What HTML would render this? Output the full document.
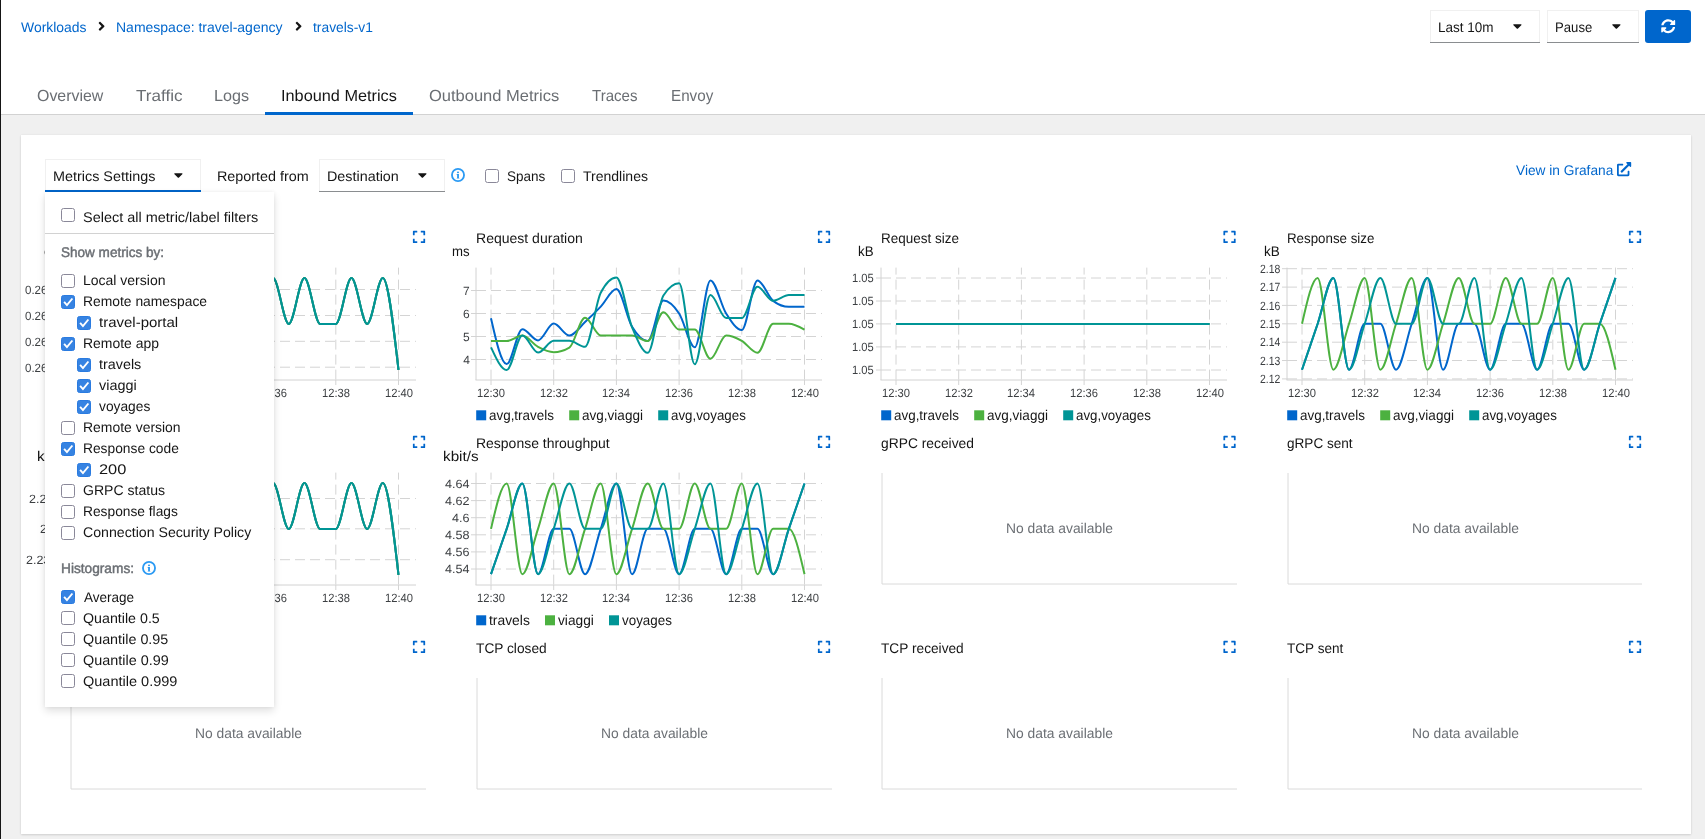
<!DOCTYPE html>
<html lang="en"><head><meta charset="utf-8"><title>Kiali</title><style>
html,body{margin:0;padding:0}
body{width:1705px;height:839px;position:relative;overflow:hidden;background:#fff;font-family:"Liberation Sans", Arial, sans-serif;font-size:14px;color:#151515}
.abs,.t,.ic,.cb{position:absolute}
.t{white-space:nowrap;line-height:1;text-rendering:geometricPrecision}
#root{left:0;top:0;width:1705px;height:839px;will-change:transform}
.ic{display:block;overflow:visible}
#side{left:0;top:0;width:1.1px;height:839px;background:#151515}
#hdr{left:1px;top:0;width:1704px;height:114px;background:#fff;border-bottom:1px solid #d2d2d2}
#bg{left:1px;top:115px;width:1704px;height:724px;background:#f0f0f0}
#card{left:21px;top:135px;width:1670px;height:699px;background:#fff;box-shadow:0 1px 2px rgba(3,3,3,.12),0 0 2px rgba(3,3,3,.06)}
#tabline{left:265px;top:111.5px;width:148px;height:3px;background:#0066cc}
.sel{box-sizing:border-box;background:#fff;border:1px solid #f0f0f0;border-bottom:0}
#refresh{left:1645px;top:10px;width:46px;height:33px;background:#0066cc;border-radius:3px}
#menu{left:45px;top:192px;width:229px;height:515px;background:#fff;box-shadow:0 4px 8px 0 rgba(3,3,3,.12),0 0 4px 0 rgba(3,3,3,.06)}
#menu .t,#menu .cb,#menu .ic,#menu .abs{margin-left:-45px;margin-top:-192px}
#msep{left:45px;top:233px;width:229px;height:1px;background:#d2d2d2}
.cb{box-sizing:border-box;width:14px;height:14px;border:1.3px solid #8a8899;border-radius:2.5px;background:#fff}
.cb.on{background:#3683e2;border:1px solid #2a7be0}
.cb svg{position:absolute;left:-1px;top:-1px}
#charts{left:0;top:0}
.g{position:static;display:block;margin:0;padding:0}
a.t{text-decoration:none}
</style></head>
<body>
<div id="root" class="abs">
<div id="hdr" class="abs"></div><div id="bg" class="abs"></div><div id="card" class="abs"></div><div id="side" class="abs"></div>
<nav class="g" aria-label="Breadcrumb"><a class="t" style="left:21.22px;top:20.00px;font-size:14px;color:#0066cc;transform:scaleX(0.9956);transform-origin:0 0;">Workloads</a><svg class="ic" style="left:97.90px;top:19.00px" width="7.20" height="14.40" viewBox="0 0 256 512"><path fill="#151515" d="M224.3 273l-136 136c-9.4 9.4-24.6 9.4-33.9 0l-22.6-22.6c-9.4-9.4-9.4-24.6 0-33.9l96.4-96.4-96.4-96.4c-9.4-9.4-9.4-24.6 0-33.9L54.3 103c9.4-9.4 24.6-9.4 33.9 0l136 136c9.5 9.4 9.5 24.6.1 34z"/></svg><a class="t" style="left:116.12px;top:20.00px;font-size:14px;color:#0066cc;transform:scaleX(0.9996);transform-origin:0 0;">Namespace: travel-agency</a><svg class="ic" style="left:294.90px;top:19.00px" width="7.20" height="14.40" viewBox="0 0 256 512"><path fill="#151515" d="M224.3 273l-136 136c-9.4 9.4-24.6 9.4-33.9 0l-22.6-22.6c-9.4-9.4-9.4-24.6 0-33.9l96.4-96.4-96.4-96.4c-9.4-9.4-9.4-24.6 0-33.9L54.3 103c9.4-9.4 24.6-9.4 33.9 0l136 136c9.5 9.4 9.5 24.6.1 34z"/></svg><a class="t" style="left:312.77px;top:20.00px;font-size:14px;color:#0066cc;transform:scaleX(0.9871);transform-origin:0 0;">travels-v1</a></nav>
<div class="g" id="time-controls"><div class="abs sel" style="left:1430px;top:10px;width:110px;height:32px"></div><div class="abs" style="left:1430px;top:42px;width:110px;height:1px;background:#8a8d90"></div><span class="t" style="left:1438.06px;top:20.10px;font-size:14px;color:#151515;transform:scaleX(0.9650);transform-origin:0 0;">Last 10m</span><svg class="ic" style="left:1512.80px;top:19.00px" width="8.75" height="14.00" viewBox="0 0 320 512"><path fill="#151515" d="M31.3 192h257.3c17.8 0 26.7 21.5 14.1 34.1L174.1 354.8c-7.8 7.8-20.5 7.8-28.3 0L17.2 226.1C4.6 213.5 13.5 192 31.3 192z"/></svg><div class="abs sel" style="left:1547px;top:10px;width:92px;height:32px"></div><div class="abs" style="left:1547px;top:42px;width:92px;height:1px;background:#8a8d90"></div><span class="t" style="left:1554.70px;top:20.10px;font-size:14px;color:#151515;transform:scaleX(0.9386);transform-origin:0 0;">Pause</span><svg class="ic" style="left:1611.80px;top:19.00px" width="8.75" height="14.00" viewBox="0 0 320 512"><path fill="#151515" d="M31.3 192h257.3c17.8 0 26.7 21.5 14.1 34.1L174.1 354.8c-7.8 7.8-20.5 7.8-28.3 0L17.2 226.1C4.6 213.5 13.5 192 31.3 192z"/></svg><div id="refresh" class="abs" role="button" aria-label="Refresh"></div><svg class="ic" style="left:1660.90px;top:19.30px" width="14.40" height="14.40" viewBox="0 0 512 512"><path fill="#fff" d="M370.72 133.28C339.458 104.008 298.888 87.962 255.848 88c-77.458.068-144.328 53.178-162.791 126.85-1.344 5.363-6.122 9.15-11.651 9.15H24.103c-7.498 0-13.194-6.807-11.807-14.176C33.933 94.924 134.813 8 256 8c66.448 0 126.791 26.136 171.315 68.685L463.03 40.97C478.149 25.851 504 36.559 504 57.941V192c0 13.255-10.745 24-24 24H345.941c-21.382 0-32.09-25.851-16.971-40.971l41.75-41.749zM32 296h134.059c21.382 0 32.09 25.851 16.971 40.971l-41.75 41.75c31.262 29.273 71.835 45.319 114.876 45.28 77.418-.07 144.315-53.144 162.787-126.849 1.344-5.363 6.122-9.15 11.651-9.15h57.304c7.498 0 13.194 6.807 11.807 14.176C478.067 417.076 377.187 504 256 504c-66.448 0-126.791-26.136-171.315-68.685L48.970 471.03C33.851 486.149 8 475.441 8 454.059V320c0-13.255 10.745-24 24-24z"/></svg></div>
<nav class="g" aria-label="Tabs"><a class="t" style="left:37.31px;top:89.10px;font-size:16px;color:#6a6e73;transform:scaleX(0.9948);transform-origin:0 0;">Overview</a><a class="t" style="left:136.00px;top:89.10px;font-size:16px;color:#6a6e73;transform:scaleX(1.0688);transform-origin:0 0;">Traffic</a><a class="t" style="left:214.46px;top:89.10px;font-size:16px;color:#6a6e73;transform:scaleX(1.0101);transform-origin:0 0;">Logs</a><a class="t" style="left:281.28px;top:89.10px;font-size:16px;color:#151515;transform:scaleX(1.0179);transform-origin:0 0;">Inbound Metrics</a><a class="t" style="left:428.77px;top:89.10px;font-size:16px;color:#6a6e73;transform:scaleX(1.0311);transform-origin:0 0;">Outbound Metrics</a><a class="t" style="left:592.45px;top:89.10px;font-size:16px;color:#6a6e73;transform:scaleX(0.9419);transform-origin:0 0;">Traces</a><a class="t" style="left:670.54px;top:89.10px;font-size:16px;color:#6a6e73;transform:scaleX(0.9495);transform-origin:0 0;">Envoy</a><div id="tabline" class="abs"></div></nav>
<div class="g" id="toolbar"><div class="abs sel" style="left:45px;top:159px;width:156px;height:31px"></div><div class="abs" style="left:45px;top:190px;width:156px;height:2px;background:#0066cc"></div><span class="t" style="left:53.09px;top:169.40px;font-size:14px;color:#151515;transform:scaleX(1.0275);transform-origin:0 0;">Metrics Settings</span><svg class="ic" style="left:173.90px;top:167.60px" width="8.75" height="14.00" viewBox="0 0 320 512"><path fill="#151515" d="M31.3 192h257.3c17.8 0 26.7 21.5 14.1 34.1L174.1 354.8c-7.8 7.8-20.5 7.8-28.3 0L17.2 226.1C4.6 213.5 13.5 192 31.3 192z"/></svg><span class="t" style="left:217.19px;top:169.40px;font-size:14px;color:#151515;transform:scaleX(1.0252);transform-origin:0 0;">Reported from</span><div class="abs sel" style="left:319px;top:159px;width:126px;height:32px"></div><div class="abs" style="left:319px;top:191px;width:126px;height:1px;background:#8a8d90"></div><span class="t" style="left:326.89px;top:169.40px;font-size:14px;color:#151515;transform:scaleX(1.0247);transform-origin:0 0;">Destination</span><svg class="ic" style="left:417.50px;top:167.60px" width="8.75" height="14.00" viewBox="0 0 320 512"><path fill="#151515" d="M31.3 192h257.3c17.8 0 26.7 21.5 14.1 34.1L174.1 354.8c-7.8 7.8-20.5 7.8-28.3 0L17.2 226.1C4.6 213.5 13.5 192 31.3 192z"/></svg><svg class="ic" style="left:451.40px;top:168.20px" width="14" height="14" viewBox="0 0 14 14"><circle cx="7" cy="7" r="6.05" fill="none" stroke="#2b9af3" stroke-width="1.8"/><ellipse cx="7" cy="4.3" rx="1.05" ry="0.85" fill="#2b9af3"/><path d="M5.7 6.1h2.25v3.6l0.6 0.9H5.5l0.6-0.9V6.9H5.7z" fill="#2b9af3"/></svg><span class="cb" style="left:484.7px;top:169.1px"></span><label class="t" style="left:506.76px;top:169.40px;font-size:14px;color:#151515;transform:scaleX(0.9652);transform-origin:0 0;">Spans</label><span class="cb" style="left:560.8px;top:169.1px"></span><label class="t" style="left:582.69px;top:169.40px;font-size:14px;color:#151515;transform:scaleX(1.0018);transform-origin:0 0;">Trendlines</label><a class="t" style="left:1516.32px;top:163.30px;font-size:14px;color:#0066cc;transform:scaleX(0.9792);transform-origin:0 0;">View in Grafana</a><svg class="ic" style="left:1617.20px;top:162.00px" width="14.20" height="14.20" viewBox="0 0 512 512"><path fill="#0066cc" d="M432,320H400a16,16,0,0,0-16,16V448H64V128H208a16,16,0,0,0,16-16V80a16,16,0,0,0-16-16H48A48,48,0,0,0,0,112V464a48,48,0,0,0,48,48H400a48,48,0,0,0,48-48V336A16,16,0,0,0,432,320ZM488,0h-128c-21.37,0-32.05,25.91-17,41l35.73,35.73L135,320.37a24,24,0,0,0,0,34L157.67,377a24,24,0,0,0,34,0L435.28,133.32,471,169c15,15,41,4.5,41-17V24A24,24,0,0,0,488,0Z"/></svg></div>
<section class="g chart" aria-label="Request volume"><span class="t title" style="left:69.69px;top:231.30px;font-size:14px;color:#151515;transform:scaleX(1.0307);transform-origin:0 0;">Request volume</span><span class="t" style="left:71.07px;top:386.90px;font-size:12px;color:#3c3f42;transform:scaleX(0.9321);transform-origin:0 0;">12:30</span><span class="t" style="left:133.77px;top:386.90px;font-size:12px;color:#3c3f42;transform:scaleX(0.9286);transform-origin:0 0;">12:32</span><span class="t" style="left:196.47px;top:386.90px;font-size:12px;color:#3c3f42;transform:scaleX(0.9342);transform-origin:0 0;">12:34</span><span class="t" style="left:259.17px;top:386.90px;font-size:12px;color:#3c3f42;transform:scaleX(0.9303);transform-origin:0 0;">12:36</span><span class="t" style="left:321.87px;top:386.90px;font-size:12px;color:#3c3f42;transform:scaleX(0.9299);transform-origin:0 0;">12:38</span><span class="t" style="left:384.57px;top:386.90px;font-size:12px;color:#3c3f42;transform:scaleX(0.9321);transform-origin:0 0;">12:40</span><span class="t" style="left:24.90px;top:284.10px;font-size:12px;color:#3c3f42;transform:scaleX(0.9593);transform-origin:0 0;">0.2675</span><span class="t" style="left:24.90px;top:310.20px;font-size:12px;color:#3c3f42;transform:scaleX(0.9596);transform-origin:0 0;">0.2670</span><span class="t" style="left:24.90px;top:336.10px;font-size:12px;color:#3c3f42;transform:scaleX(0.9593);transform-origin:0 0;">0.2665</span><span class="t" style="left:24.90px;top:361.60px;font-size:12px;color:#3c3f42;transform:scaleX(0.9596);transform-origin:0 0;">0.2660</span><span class="t" style="left:44.25px;top:244.20px;font-size:14px;color:#151515;transform:scaleX(1.0304);transform-origin:0 0;">ops</span><span class="t" style="left:83.07px;top:408.40px;font-size:14px;color:#151515;transform:scaleX(0.9899);transform-origin:0 0;">travels</span><span class="t" style="left:152.39px;top:408.40px;font-size:14px;color:#151515;transform:scaleX(0.9791);transform-origin:0 0;">viaggi</span><span class="t" style="left:216.40px;top:408.40px;font-size:14px;color:#151515;transform:scaleX(0.9567);transform-origin:0 0;">voyages</span></section>
<section class="g chart" aria-label="Request duration"><span class="t title" style="left:475.72px;top:231.30px;font-size:14px;color:#151515;transform:scaleX(1.0016);transform-origin:0 0;">Request duration</span><span class="t" style="left:477.07px;top:386.90px;font-size:12px;color:#3c3f42;transform:scaleX(0.9321);transform-origin:0 0;">12:30</span><span class="t" style="left:539.77px;top:386.90px;font-size:12px;color:#3c3f42;transform:scaleX(0.9286);transform-origin:0 0;">12:32</span><span class="t" style="left:602.47px;top:386.90px;font-size:12px;color:#3c3f42;transform:scaleX(0.9342);transform-origin:0 0;">12:34</span><span class="t" style="left:665.17px;top:386.90px;font-size:12px;color:#3c3f42;transform:scaleX(0.9303);transform-origin:0 0;">12:36</span><span class="t" style="left:727.87px;top:386.90px;font-size:12px;color:#3c3f42;transform:scaleX(0.9299);transform-origin:0 0;">12:38</span><span class="t" style="left:790.57px;top:386.90px;font-size:12px;color:#3c3f42;transform:scaleX(0.9321);transform-origin:0 0;">12:40</span><span class="t" style="left:462.95px;top:284.70px;font-size:12px;color:#3c3f42;transform:scaleX(1.0000);transform-origin:0 0;">7</span><span class="t" style="left:462.94px;top:307.70px;font-size:12px;color:#3c3f42;transform:scaleX(1.0000);transform-origin:0 0;">6</span><span class="t" style="left:462.94px;top:330.70px;font-size:12px;color:#3c3f42;transform:scaleX(1.0000);transform-origin:0 0;">5</span><span class="t" style="left:463.13px;top:353.70px;font-size:12px;color:#3c3f42;transform:scaleX(1.0000);transform-origin:0 0;">4</span><span class="t" style="left:452.36px;top:244.20px;font-size:14px;color:#151515;transform:scaleX(0.9412);transform-origin:0 0;">ms</span><span class="t" style="left:489.07px;top:408.40px;font-size:14px;color:#151515;transform:scaleX(0.9587);transform-origin:0 0;">avg,travels</span><span class="t" style="left:582.36px;top:408.40px;font-size:14px;color:#151515;transform:scaleX(0.9668);transform-origin:0 0;">avg,viaggi</span><span class="t" style="left:671.18px;top:408.40px;font-size:14px;color:#151515;transform:scaleX(0.9516);transform-origin:0 0;">avg,voyages</span></section>
<section class="g chart" aria-label="Request size"><span class="t title" style="left:880.77px;top:231.30px;font-size:14px;color:#151515;transform:scaleX(0.9633);transform-origin:0 0;">Request size</span><span class="t" style="left:882.07px;top:386.90px;font-size:12px;color:#3c3f42;transform:scaleX(0.9321);transform-origin:0 0;">12:30</span><span class="t" style="left:944.77px;top:386.90px;font-size:12px;color:#3c3f42;transform:scaleX(0.9286);transform-origin:0 0;">12:32</span><span class="t" style="left:1007.47px;top:386.90px;font-size:12px;color:#3c3f42;transform:scaleX(0.9342);transform-origin:0 0;">12:34</span><span class="t" style="left:1070.17px;top:386.90px;font-size:12px;color:#3c3f42;transform:scaleX(0.9303);transform-origin:0 0;">12:36</span><span class="t" style="left:1132.87px;top:386.90px;font-size:12px;color:#3c3f42;transform:scaleX(0.9299);transform-origin:0 0;">12:38</span><span class="t" style="left:1195.57px;top:386.90px;font-size:12px;color:#3c3f42;transform:scaleX(0.9321);transform-origin:0 0;">12:40</span><span class="t" style="left:851.96px;top:272.20px;font-size:12px;color:#3c3f42;transform:scaleX(0.9300);transform-origin:0 0;">1.05</span><span class="t" style="left:851.96px;top:295.20px;font-size:12px;color:#3c3f42;transform:scaleX(0.9300);transform-origin:0 0;">1.05</span><span class="t" style="left:851.96px;top:318.10px;font-size:12px;color:#3c3f42;transform:scaleX(0.9300);transform-origin:0 0;">1.05</span><span class="t" style="left:851.96px;top:341.10px;font-size:12px;color:#3c3f42;transform:scaleX(0.9300);transform-origin:0 0;">1.05</span><span class="t" style="left:851.96px;top:364.20px;font-size:12px;color:#3c3f42;transform:scaleX(0.9300);transform-origin:0 0;">1.05</span><span class="t" style="left:857.55px;top:244.20px;font-size:14px;color:#151515;transform:scaleX(0.9503);transform-origin:0 0;">kB</span><span class="t" style="left:894.07px;top:408.40px;font-size:14px;color:#151515;transform:scaleX(0.9587);transform-origin:0 0;">avg,travels</span><span class="t" style="left:987.36px;top:408.40px;font-size:14px;color:#151515;transform:scaleX(0.9668);transform-origin:0 0;">avg,viaggi</span><span class="t" style="left:1076.18px;top:408.40px;font-size:14px;color:#151515;transform:scaleX(0.9516);transform-origin:0 0;">avg,voyages</span></section>
<section class="g chart" aria-label="Response size"><span class="t title" style="left:1286.78px;top:231.30px;font-size:14px;color:#151515;transform:scaleX(0.9519);transform-origin:0 0;">Response size</span><span class="t" style="left:1288.07px;top:386.90px;font-size:12px;color:#3c3f42;transform:scaleX(0.9321);transform-origin:0 0;">12:30</span><span class="t" style="left:1350.77px;top:386.90px;font-size:12px;color:#3c3f42;transform:scaleX(0.9286);transform-origin:0 0;">12:32</span><span class="t" style="left:1413.47px;top:386.90px;font-size:12px;color:#3c3f42;transform:scaleX(0.9342);transform-origin:0 0;">12:34</span><span class="t" style="left:1476.17px;top:386.90px;font-size:12px;color:#3c3f42;transform:scaleX(0.9303);transform-origin:0 0;">12:36</span><span class="t" style="left:1538.87px;top:386.90px;font-size:12px;color:#3c3f42;transform:scaleX(0.9299);transform-origin:0 0;">12:38</span><span class="t" style="left:1601.57px;top:386.90px;font-size:12px;color:#3c3f42;transform:scaleX(0.9321);transform-origin:0 0;">12:40</span><span class="t" style="left:1259.52px;top:262.90px;font-size:12px;color:#3c3f42;transform:scaleX(0.8700);transform-origin:0 0;">2.18</span><span class="t" style="left:1259.62px;top:281.30px;font-size:12px;color:#3c3f42;transform:scaleX(0.8700);transform-origin:0 0;">2.17</span><span class="t" style="left:1259.55px;top:299.60px;font-size:12px;color:#3c3f42;transform:scaleX(0.8700);transform-origin:0 0;">2.16</span><span class="t" style="left:1259.53px;top:318.00px;font-size:12px;color:#3c3f42;transform:scaleX(0.8700);transform-origin:0 0;">2.15</span><span class="t" style="left:1259.62px;top:336.40px;font-size:12px;color:#3c3f42;transform:scaleX(0.8700);transform-origin:0 0;">2.14</span><span class="t" style="left:1259.56px;top:354.70px;font-size:12px;color:#3c3f42;transform:scaleX(0.8700);transform-origin:0 0;">2.13</span><span class="t" style="left:1259.56px;top:373.10px;font-size:12px;color:#3c3f42;transform:scaleX(0.8700);transform-origin:0 0;">2.12</span><span class="t" style="left:1263.74px;top:244.20px;font-size:14px;color:#151515;transform:scaleX(0.9641);transform-origin:0 0;">kB</span><span class="t" style="left:1300.07px;top:408.40px;font-size:14px;color:#151515;transform:scaleX(0.9587);transform-origin:0 0;">avg,travels</span><span class="t" style="left:1393.36px;top:408.40px;font-size:14px;color:#151515;transform:scaleX(0.9668);transform-origin:0 0;">avg,viaggi</span><span class="t" style="left:1482.18px;top:408.40px;font-size:14px;color:#151515;transform:scaleX(0.9516);transform-origin:0 0;">avg,voyages</span></section>
<section class="g chart" aria-label="Request throughput"><span class="t title" style="left:69.71px;top:436.30px;font-size:14px;color:#151515;transform:scaleX(1.0076);transform-origin:0 0;">Request throughput</span><span class="t" style="left:71.07px;top:591.90px;font-size:12px;color:#3c3f42;transform:scaleX(0.9321);transform-origin:0 0;">12:30</span><span class="t" style="left:133.77px;top:591.90px;font-size:12px;color:#3c3f42;transform:scaleX(0.9286);transform-origin:0 0;">12:32</span><span class="t" style="left:196.47px;top:591.90px;font-size:12px;color:#3c3f42;transform:scaleX(0.9342);transform-origin:0 0;">12:34</span><span class="t" style="left:259.17px;top:591.90px;font-size:12px;color:#3c3f42;transform:scaleX(0.9303);transform-origin:0 0;">12:36</span><span class="t" style="left:321.87px;top:591.90px;font-size:12px;color:#3c3f42;transform:scaleX(0.9299);transform-origin:0 0;">12:38</span><span class="t" style="left:384.57px;top:591.90px;font-size:12px;color:#3c3f42;transform:scaleX(0.9321);transform-origin:0 0;">12:40</span><span class="t" style="left:28.96px;top:493.20px;font-size:12px;color:#3c3f42;transform:scaleX(1.0377);transform-origin:0 0;">2.245</span><span class="t" style="left:40.37px;top:523.20px;font-size:12px;color:#3c3f42;transform:scaleX(1.0307);transform-origin:0 0;">2.24</span><span class="t" style="left:26.16px;top:554.20px;font-size:12px;color:#3c3f42;transform:scaleX(1.0377);transform-origin:0 0;">2.235</span><span class="t" style="left:36.81px;top:449.20px;font-size:14px;color:#151515;transform:scaleX(1.0903);transform-origin:0 0;">kbit/s</span><span class="t" style="left:83.07px;top:613.40px;font-size:14px;color:#151515;transform:scaleX(0.9899);transform-origin:0 0;">travels</span><span class="t" style="left:152.39px;top:613.40px;font-size:14px;color:#151515;transform:scaleX(0.9791);transform-origin:0 0;">viaggi</span><span class="t" style="left:216.40px;top:613.40px;font-size:14px;color:#151515;transform:scaleX(0.9567);transform-origin:0 0;">voyages</span></section>
<section class="g chart" aria-label="Response throughput"><span class="t title" style="left:475.73px;top:436.30px;font-size:14px;color:#151515;transform:scaleX(0.9979);transform-origin:0 0;">Response throughput</span><span class="t" style="left:477.07px;top:591.90px;font-size:12px;color:#3c3f42;transform:scaleX(0.9321);transform-origin:0 0;">12:30</span><span class="t" style="left:539.77px;top:591.90px;font-size:12px;color:#3c3f42;transform:scaleX(0.9286);transform-origin:0 0;">12:32</span><span class="t" style="left:602.47px;top:591.90px;font-size:12px;color:#3c3f42;transform:scaleX(0.9342);transform-origin:0 0;">12:34</span><span class="t" style="left:665.17px;top:591.90px;font-size:12px;color:#3c3f42;transform:scaleX(0.9303);transform-origin:0 0;">12:36</span><span class="t" style="left:727.87px;top:591.90px;font-size:12px;color:#3c3f42;transform:scaleX(0.9299);transform-origin:0 0;">12:38</span><span class="t" style="left:790.57px;top:591.90px;font-size:12px;color:#3c3f42;transform:scaleX(0.9321);transform-origin:0 0;">12:40</span><span class="t" style="left:445.03px;top:477.70px;font-size:12px;color:#3c3f42;transform:scaleX(1.0500);transform-origin:0 0;">4.64</span><span class="t" style="left:444.95px;top:494.80px;font-size:12px;color:#3c3f42;transform:scaleX(1.0500);transform-origin:0 0;">4.62</span><span class="t" style="left:452.14px;top:511.90px;font-size:12px;color:#3c3f42;transform:scaleX(1.0500);transform-origin:0 0;">4.6</span><span class="t" style="left:444.91px;top:529.00px;font-size:12px;color:#3c3f42;transform:scaleX(1.0500);transform-origin:0 0;">4.58</span><span class="t" style="left:444.94px;top:546.10px;font-size:12px;color:#3c3f42;transform:scaleX(1.0500);transform-origin:0 0;">4.56</span><span class="t" style="left:445.03px;top:563.20px;font-size:12px;color:#3c3f42;transform:scaleX(1.0500);transform-origin:0 0;">4.54</span><span class="t" style="left:442.81px;top:449.20px;font-size:14px;color:#151515;transform:scaleX(1.0903);transform-origin:0 0;">kbit/s</span><span class="t" style="left:489.07px;top:613.40px;font-size:14px;color:#151515;transform:scaleX(0.9899);transform-origin:0 0;">travels</span><span class="t" style="left:558.39px;top:613.40px;font-size:14px;color:#151515;transform:scaleX(0.9791);transform-origin:0 0;">viaggi</span><span class="t" style="left:622.40px;top:613.40px;font-size:14px;color:#151515;transform:scaleX(0.9567);transform-origin:0 0;">voyages</span></section>
<section class="g chart" aria-label="gRPC received"><span class="t title" style="left:880.91px;top:436.30px;font-size:14px;color:#151515;transform:scaleX(0.9870);transform-origin:0 0;">gRPC received</span><span class="t" style="left:1005.64px;top:521.00px;font-size:14px;color:#6a6e73;transform:scaleX(0.9883);transform-origin:0 0;">No data available</span></section>
<section class="g chart" aria-label="gRPC sent"><span class="t title" style="left:1286.93px;top:436.30px;font-size:14px;color:#151515;transform:scaleX(0.9688);transform-origin:0 0;">gRPC sent</span><span class="t" style="left:1411.64px;top:521.00px;font-size:14px;color:#6a6e73;transform:scaleX(0.9883);transform-origin:0 0;">No data available</span></section>
<section class="g chart" aria-label="TCP opened"><span class="t title" style="left:70.35px;top:641.30px;font-size:14px;color:#151515;transform:scaleX(0.9604);transform-origin:0 0;">TCP opened</span><span class="t" style="left:194.64px;top:726.00px;font-size:14px;color:#6a6e73;transform:scaleX(0.9883);transform-origin:0 0;">No data available</span></section>
<section class="g chart" aria-label="TCP closed"><span class="t title" style="left:476.32px;top:641.30px;font-size:14px;color:#151515;transform:scaleX(0.9800);transform-origin:0 0;">TCP closed</span><span class="t" style="left:600.64px;top:726.00px;font-size:14px;color:#6a6e73;transform:scaleX(0.9883);transform-origin:0 0;">No data available</span></section>
<section class="g chart" aria-label="TCP received"><span class="t title" style="left:881.32px;top:641.30px;font-size:14px;color:#151515;transform:scaleX(0.9783);transform-origin:0 0;">TCP received</span><span class="t" style="left:1005.64px;top:726.00px;font-size:14px;color:#6a6e73;transform:scaleX(0.9883);transform-origin:0 0;">No data available</span></section>
<section class="g chart" aria-label="TCP sent"><span class="t title" style="left:1287.34px;top:641.30px;font-size:14px;color:#151515;transform:scaleX(0.9682);transform-origin:0 0;">TCP sent</span><span class="t" style="left:1411.64px;top:726.00px;font-size:14px;color:#6a6e73;transform:scaleX(0.9883);transform-origin:0 0;">No data available</span></section>
<svg id="charts" class="abs" width="1705" height="839" viewBox="0 0 1705 839"><g aria-label="Request volume"><g transform="translate(412.90,230.00) scale(0.02734)" fill="#0066cc"><path d="M0 180V56c0-13.3 10.7-24 24-24h124c6.600 0 12 5.400 12 12v40c0 6.600-5.400 12-12 12H64v84c0 6.600-5.400 12-12 12H12c-6.600 0-12-5.400-12-12zM288 44v40c0 6.600 5.400 12 12 12h84v84c0 6.600 5.400 12 12 12h40c6.600 0 12-5.400 12-12V56c0-13.300-10.700-24-24-24H300c-6.600 0-12 5.400-12 12zm148 276h-40c-6.600 0-12 5.400-12 12v84h-84c-6.600 0-12 5.400-12 12v40c0 6.600 5.400 12 12 12h124c13.300 0 24-10.700 24-24V332c0-6.600-5.400-12-12-12zM160 468v-40c0-6.600-5.400-12-12-12H64v-84c0-6.600-5.400-12-12-12H12c-6.600 0-12 5.400-12 12v124c0 13.300 10.700 24 24 24h124c6.600 0 12-5.400 12-12z"/></g><path d="M85.00,379.60V267.60" stroke="#d4d4d4" stroke-width="1" stroke-dasharray="10,5" fill="none"/><path d="M85.00,380.00v5" stroke="#d4d4d4" stroke-width="1" fill="none"/><path d="M147.70,379.60V267.60" stroke="#d4d4d4" stroke-width="1" stroke-dasharray="10,5" fill="none"/><path d="M147.70,380.00v5" stroke="#d4d4d4" stroke-width="1" fill="none"/><path d="M210.40,379.60V267.60" stroke="#d4d4d4" stroke-width="1" stroke-dasharray="10,5" fill="none"/><path d="M210.40,380.00v5" stroke="#d4d4d4" stroke-width="1" fill="none"/><path d="M273.10,379.60V267.60" stroke="#d4d4d4" stroke-width="1" stroke-dasharray="10,5" fill="none"/><path d="M273.10,380.00v5" stroke="#d4d4d4" stroke-width="1" fill="none"/><path d="M335.80,379.60V267.60" stroke="#d4d4d4" stroke-width="1" stroke-dasharray="10,5" fill="none"/><path d="M335.80,380.00v5" stroke="#d4d4d4" stroke-width="1" fill="none"/><path d="M398.50,379.60V267.60" stroke="#d4d4d4" stroke-width="1" stroke-dasharray="10,5" fill="none"/><path d="M398.50,380.00v5" stroke="#d4d4d4" stroke-width="1" fill="none"/><path d="M70.00,289.50H416.00" stroke="#d4d4d4" stroke-width="1" stroke-dasharray="10,5" fill="none"/><path d="M65.00,289.50h5" stroke="#d4d4d4" stroke-width="1" fill="none"/><path d="M70.00,315.50H416.00" stroke="#d4d4d4" stroke-width="1" stroke-dasharray="10,5" fill="none"/><path d="M65.00,315.50h5" stroke="#d4d4d4" stroke-width="1" fill="none"/><path d="M70.00,341.30H416.00" stroke="#d4d4d4" stroke-width="1" stroke-dasharray="10,5" fill="none"/><path d="M65.00,341.30h5" stroke="#d4d4d4" stroke-width="1" fill="none"/><path d="M70.00,367.20H416.00" stroke="#d4d4d4" stroke-width="1" stroke-dasharray="10,5" fill="none"/><path d="M65.00,367.20h5" stroke="#d4d4d4" stroke-width="1" fill="none"/><path d="M70.00,267.60V380.00" stroke="#d2d2d2" stroke-width="1" fill="none"/><path d="M69.50,380.00H416.00" stroke="#d2d2d2" stroke-width="1" fill="none"/><path d="M85.00,324.00C90.22,301.05,95.45,278.10,100.67,278.10C105.90,278.10,111.12,324.00,116.35,324.00C121.58,324.00,126.80,278.10,132.03,278.10C137.25,278.10,142.47,324.00,147.70,324.00C152.92,324.00,158.15,324.00,163.38,324.00C168.60,324.00,173.83,278.10,179.05,278.10C184.28,278.10,189.50,324.00,194.72,324.00C199.95,324.00,205.18,324.00,210.40,324.00C215.62,324.00,220.85,278.10,226.07,278.10C231.30,278.10,236.53,324.00,241.75,324.00C246.97,324.00,252.20,324.00,257.43,324.00C262.65,324.00,267.88,278.10,273.10,278.10C278.32,278.10,283.55,324.00,288.77,324.00C294.00,324.00,299.22,278.10,304.45,278.10C309.68,278.10,314.90,324.00,320.12,324.00C325.35,324.00,330.57,324.00,335.80,324.00C341.03,324.00,346.25,278.10,351.48,278.10C356.70,278.10,361.93,324.00,367.15,324.00C372.38,324.00,377.60,278.10,382.82,278.10C388.05,278.10,393.27,324.00,398.50,369.90" stroke="#0066cc" stroke-width="2" fill="none"/><path d="M85.00,324.00C90.22,301.05,95.45,278.10,100.67,278.10C105.90,278.10,111.12,324.00,116.35,324.00C121.58,324.00,126.80,278.10,132.03,278.10C137.25,278.10,142.47,324.00,147.70,324.00C152.92,324.00,158.15,324.00,163.38,324.00C168.60,324.00,173.83,278.10,179.05,278.10C184.28,278.10,189.50,324.00,194.72,324.00C199.95,324.00,205.18,324.00,210.40,324.00C215.62,324.00,220.85,278.10,226.07,278.10C231.30,278.10,236.53,324.00,241.75,324.00C246.97,324.00,252.20,324.00,257.43,324.00C262.65,324.00,267.88,278.10,273.10,278.10C278.32,278.10,283.55,324.00,288.77,324.00C294.00,324.00,299.22,278.10,304.45,278.10C309.68,278.10,314.90,324.00,320.12,324.00C325.35,324.00,330.57,324.00,335.80,324.00C341.03,324.00,346.25,278.10,351.48,278.10C356.70,278.10,361.93,324.00,367.15,324.00C372.38,324.00,377.60,278.10,382.82,278.10C388.05,278.10,393.27,324.00,398.50,369.90" stroke="#4cb140" stroke-width="2" fill="none"/><path d="M85.00,324.00C90.22,301.05,95.45,278.10,100.67,278.10C105.90,278.10,111.12,324.00,116.35,324.00C121.58,324.00,126.80,278.10,132.03,278.10C137.25,278.10,142.47,324.00,147.70,324.00C152.92,324.00,158.15,324.00,163.38,324.00C168.60,324.00,173.83,278.10,179.05,278.10C184.28,278.10,189.50,324.00,194.72,324.00C199.95,324.00,205.18,324.00,210.40,324.00C215.62,324.00,220.85,278.10,226.07,278.10C231.30,278.10,236.53,324.00,241.75,324.00C246.97,324.00,252.20,324.00,257.43,324.00C262.65,324.00,267.88,278.10,273.10,278.10C278.32,278.10,283.55,324.00,288.77,324.00C294.00,324.00,299.22,278.10,304.45,278.10C309.68,278.10,314.90,324.00,320.12,324.00C325.35,324.00,330.57,324.00,335.80,324.00C341.03,324.00,346.25,278.10,351.48,278.10C356.70,278.10,361.93,324.00,367.15,324.00C372.38,324.00,377.60,278.10,382.82,278.10C388.05,278.10,393.27,324.00,398.50,369.90" stroke="#009596" stroke-width="2" fill="none"/><rect x="70.20" y="410.30" width="10" height="10" fill="#0066cc"/><rect x="139.00" y="410.30" width="10" height="10" fill="#4cb140"/><rect x="203.00" y="410.30" width="10" height="10" fill="#009596"/></g><g aria-label="Request duration"><g transform="translate(817.90,230.00) scale(0.02734)" fill="#0066cc"><path d="M0 180V56c0-13.3 10.7-24 24-24h124c6.600 0 12 5.400 12 12v40c0 6.600-5.400 12-12 12H64v84c0 6.600-5.400 12-12 12H12c-6.600 0-12-5.400-12-12zM288 44v40c0 6.600 5.400 12 12 12h84v84c0 6.600 5.400 12 12 12h40c6.600 0 12-5.400 12-12V56c0-13.300-10.700-24-24-24H300c-6.600 0-12 5.400-12 12zm148 276h-40c-6.600 0-12 5.400-12 12v84h-84c-6.600 0-12 5.400-12 12v40c0 6.600 5.400 12 12 12h124c13.300 0 24-10.700 24-24V332c0-6.600-5.400-12-12-12zM160 468v-40c0-6.600-5.400-12-12-12H64v-84c0-6.600-5.400-12-12-12H12c-6.600 0-12 5.400-12 12v124c0 13.300 10.700 24 24 24h124c6.600 0 12-5.400 12-12z"/></g><path d="M491.00,379.60V267.60" stroke="#d4d4d4" stroke-width="1" stroke-dasharray="10,5" fill="none"/><path d="M491.00,380.00v5" stroke="#d4d4d4" stroke-width="1" fill="none"/><path d="M553.70,379.60V267.60" stroke="#d4d4d4" stroke-width="1" stroke-dasharray="10,5" fill="none"/><path d="M553.70,380.00v5" stroke="#d4d4d4" stroke-width="1" fill="none"/><path d="M616.40,379.60V267.60" stroke="#d4d4d4" stroke-width="1" stroke-dasharray="10,5" fill="none"/><path d="M616.40,380.00v5" stroke="#d4d4d4" stroke-width="1" fill="none"/><path d="M679.10,379.60V267.60" stroke="#d4d4d4" stroke-width="1" stroke-dasharray="10,5" fill="none"/><path d="M679.10,380.00v5" stroke="#d4d4d4" stroke-width="1" fill="none"/><path d="M741.80,379.60V267.60" stroke="#d4d4d4" stroke-width="1" stroke-dasharray="10,5" fill="none"/><path d="M741.80,380.00v5" stroke="#d4d4d4" stroke-width="1" fill="none"/><path d="M804.50,379.60V267.60" stroke="#d4d4d4" stroke-width="1" stroke-dasharray="10,5" fill="none"/><path d="M804.50,380.00v5" stroke="#d4d4d4" stroke-width="1" fill="none"/><path d="M476.00,290.50H822.00" stroke="#d4d4d4" stroke-width="1" stroke-dasharray="10,5" fill="none"/><path d="M471.00,290.50h5" stroke="#d4d4d4" stroke-width="1" fill="none"/><path d="M476.00,313.50H822.00" stroke="#d4d4d4" stroke-width="1" stroke-dasharray="10,5" fill="none"/><path d="M471.00,313.50h5" stroke="#d4d4d4" stroke-width="1" fill="none"/><path d="M476.00,336.50H822.00" stroke="#d4d4d4" stroke-width="1" stroke-dasharray="10,5" fill="none"/><path d="M471.00,336.50h5" stroke="#d4d4d4" stroke-width="1" fill="none"/><path d="M476.00,359.50H822.00" stroke="#d4d4d4" stroke-width="1" stroke-dasharray="10,5" fill="none"/><path d="M471.00,359.50h5" stroke="#d4d4d4" stroke-width="1" fill="none"/><path d="M476.00,267.60V380.00" stroke="#d2d2d2" stroke-width="1" fill="none"/><path d="M475.50,380.00H822.00" stroke="#d2d2d2" stroke-width="1" fill="none"/><path d="M491.00,318.33C496.23,341.22,501.45,364.10,506.68,364.10C511.90,364.10,517.12,329.14,522.35,329.14C527.58,329.14,532.80,340.41,538.02,340.41C543.25,340.41,548.48,323.62,553.70,323.62C558.93,323.62,564.15,335.58,569.38,335.58C574.60,335.58,579.82,326.84,585.05,322.01C590.27,317.18,595.50,312.08,600.73,306.60C605.95,301.12,611.17,289.12,616.40,289.12C621.62,289.12,626.85,318.18,632.08,326.84C637.30,335.50,642.52,341.10,647.75,341.10C652.98,341.10,658.20,300.62,663.42,300.62C668.65,300.62,673.88,305.72,679.10,313.50C684.33,321.28,689.55,347.31,694.77,347.31C700.00,347.31,705.23,280.38,710.45,280.38C715.68,280.38,720.90,305.22,726.12,313.50C731.35,321.78,736.57,330.06,741.80,330.06C747.02,330.06,752.25,280.38,757.48,280.38C762.70,280.38,767.92,296.86,773.15,300.85C778.38,304.84,783.60,306.83,788.83,306.83C794.05,306.83,799.27,306.83,804.50,306.83" stroke="#0066cc" stroke-width="2" fill="none"/><path d="M491.00,341.10C496.23,341.10,501.45,341.10,506.68,341.10C511.90,341.10,517.12,335.58,522.35,335.58C527.58,335.58,532.80,344.09,538.02,346.85C543.25,349.61,548.48,352.14,553.70,352.14C558.93,352.14,564.15,350.61,569.38,347.54C574.60,344.47,579.82,317.64,585.05,317.64C590.27,317.64,595.50,335.58,600.73,335.58C605.95,335.58,611.17,335.58,616.40,335.58C621.62,335.58,626.85,335.58,632.08,335.58C637.30,335.58,642.52,341.10,647.75,341.10C652.98,341.10,658.20,312.35,663.42,312.35C668.65,312.35,673.88,329.60,679.10,329.60C684.33,329.60,689.55,329.60,694.77,329.60C700.00,329.60,705.23,358.81,710.45,358.81C715.68,358.81,720.90,335.58,726.12,335.58C731.35,335.58,736.57,338.00,741.80,340.87C747.02,343.75,752.25,352.83,757.48,352.83C762.70,352.83,767.92,323.85,773.15,323.85C778.38,323.85,783.60,323.85,788.83,323.85C794.05,323.85,799.27,326.73,804.50,329.60" stroke="#4cb140" stroke-width="2" fill="none"/><path d="M491.00,347.31C496.23,358.69,501.45,370.08,506.68,370.08C511.90,370.08,517.12,335.58,522.35,335.58C527.58,335.58,532.80,352.60,538.02,352.60C543.25,352.60,548.48,340.87,553.70,340.87C558.93,340.87,564.15,340.87,569.38,340.87C574.60,340.87,579.82,346.85,585.05,346.85C590.27,346.85,595.50,303.07,600.73,292.80C605.95,282.53,611.17,277.39,616.40,277.39C621.62,277.39,626.85,314.73,632.08,327.30C637.30,339.87,642.52,352.83,647.75,352.83C652.98,352.83,658.20,303.69,663.42,295.56C668.65,287.43,673.88,283.37,679.10,283.37C684.33,283.37,689.55,364.33,694.77,364.33C700.00,364.33,705.23,295.10,710.45,295.10C715.68,295.10,720.90,318.10,726.12,318.10C731.35,318.10,736.57,318.10,741.80,318.10C747.02,318.10,752.25,286.82,757.48,286.82C762.70,286.82,767.92,300.85,773.15,300.85C778.38,300.85,783.60,295.10,788.83,295.10C794.05,295.10,799.27,295.10,804.50,295.10" stroke="#009596" stroke-width="2" fill="none"/><rect x="476.20" y="410.30" width="10" height="10" fill="#0066cc"/><rect x="569.20" y="410.30" width="10" height="10" fill="#4cb140"/><rect x="658.20" y="410.30" width="10" height="10" fill="#009596"/></g><g aria-label="Request size"><g transform="translate(1223.40,230.00) scale(0.02734)" fill="#0066cc"><path d="M0 180V56c0-13.3 10.7-24 24-24h124c6.600 0 12 5.400 12 12v40c0 6.600-5.400 12-12 12H64v84c0 6.600-5.400 12-12 12H12c-6.600 0-12-5.400-12-12zM288 44v40c0 6.600 5.400 12 12 12h84v84c0 6.600 5.400 12 12 12h40c6.600 0 12-5.400 12-12V56c0-13.300-10.700-24-24-24H300c-6.600 0-12 5.400-12 12zm148 276h-40c-6.600 0-12 5.400-12 12v84h-84c-6.600 0-12 5.400-12 12v40c0 6.600 5.400 12 12 12h124c13.300 0 24-10.700 24-24V332c0-6.600-5.400-12-12-12zM160 468v-40c0-6.600-5.400-12-12-12H64v-84c0-6.600-5.400-12-12-12H12c-6.600 0-12 5.400-12 12v124c0 13.300 10.700 24 24 24h124c6.600 0 12-5.400 12-12z"/></g><path d="M896.00,379.60V267.60" stroke="#d4d4d4" stroke-width="1" stroke-dasharray="10,5" fill="none"/><path d="M896.00,380.00v5" stroke="#d4d4d4" stroke-width="1" fill="none"/><path d="M958.70,379.60V267.60" stroke="#d4d4d4" stroke-width="1" stroke-dasharray="10,5" fill="none"/><path d="M958.70,380.00v5" stroke="#d4d4d4" stroke-width="1" fill="none"/><path d="M1021.40,379.60V267.60" stroke="#d4d4d4" stroke-width="1" stroke-dasharray="10,5" fill="none"/><path d="M1021.40,380.00v5" stroke="#d4d4d4" stroke-width="1" fill="none"/><path d="M1084.10,379.60V267.60" stroke="#d4d4d4" stroke-width="1" stroke-dasharray="10,5" fill="none"/><path d="M1084.10,380.00v5" stroke="#d4d4d4" stroke-width="1" fill="none"/><path d="M1146.80,379.60V267.60" stroke="#d4d4d4" stroke-width="1" stroke-dasharray="10,5" fill="none"/><path d="M1146.80,380.00v5" stroke="#d4d4d4" stroke-width="1" fill="none"/><path d="M1209.50,379.60V267.60" stroke="#d4d4d4" stroke-width="1" stroke-dasharray="10,5" fill="none"/><path d="M1209.50,380.00v5" stroke="#d4d4d4" stroke-width="1" fill="none"/><path d="M881.00,278.00H1227.00" stroke="#d4d4d4" stroke-width="1" stroke-dasharray="10,5" fill="none"/><path d="M876.00,278.00h5" stroke="#d4d4d4" stroke-width="1" fill="none"/><path d="M881.00,301.00H1227.00" stroke="#d4d4d4" stroke-width="1" stroke-dasharray="10,5" fill="none"/><path d="M876.00,301.00h5" stroke="#d4d4d4" stroke-width="1" fill="none"/><path d="M881.00,323.90H1227.00" stroke="#d4d4d4" stroke-width="1" stroke-dasharray="10,5" fill="none"/><path d="M876.00,323.90h5" stroke="#d4d4d4" stroke-width="1" fill="none"/><path d="M881.00,346.90H1227.00" stroke="#d4d4d4" stroke-width="1" stroke-dasharray="10,5" fill="none"/><path d="M876.00,346.90h5" stroke="#d4d4d4" stroke-width="1" fill="none"/><path d="M881.00,370.00H1227.00" stroke="#d4d4d4" stroke-width="1" stroke-dasharray="10,5" fill="none"/><path d="M876.00,370.00h5" stroke="#d4d4d4" stroke-width="1" fill="none"/><path d="M881.00,267.60V380.00" stroke="#d2d2d2" stroke-width="1" fill="none"/><path d="M880.50,380.00H1227.00" stroke="#d2d2d2" stroke-width="1" fill="none"/><path d="M896.00,323.90C901.23,323.90,906.45,323.90,911.67,323.90C916.90,323.90,922.12,323.90,927.35,323.90C932.58,323.90,937.80,323.90,943.02,323.90C948.25,323.90,953.48,323.90,958.70,323.90C963.93,323.90,969.15,323.90,974.38,323.90C979.60,323.90,984.82,323.90,990.05,323.90C995.27,323.90,1000.50,323.90,1005.73,323.90C1010.95,323.90,1016.17,323.90,1021.40,323.90C1026.62,323.90,1031.85,323.90,1037.08,323.90C1042.30,323.90,1047.53,323.90,1052.75,323.90C1057.97,323.90,1063.20,323.90,1068.42,323.90C1073.65,323.90,1078.88,323.90,1084.10,323.90C1089.33,323.90,1094.55,323.90,1099.78,323.90C1105.00,323.90,1110.23,323.90,1115.45,323.90C1120.67,323.90,1125.90,323.90,1131.12,323.90C1136.35,323.90,1141.58,323.90,1146.80,323.90C1152.02,323.90,1157.25,323.90,1162.47,323.90C1167.70,323.90,1172.92,323.90,1178.15,323.90C1183.38,323.90,1188.60,323.90,1193.83,323.90C1199.05,323.90,1204.28,323.90,1209.50,323.90" stroke="#0066cc" stroke-width="2" fill="none"/><path d="M896.00,323.90C901.23,323.90,906.45,323.90,911.67,323.90C916.90,323.90,922.12,323.90,927.35,323.90C932.58,323.90,937.80,323.90,943.02,323.90C948.25,323.90,953.48,323.90,958.70,323.90C963.93,323.90,969.15,323.90,974.38,323.90C979.60,323.90,984.82,323.90,990.05,323.90C995.27,323.90,1000.50,323.90,1005.73,323.90C1010.95,323.90,1016.17,323.90,1021.40,323.90C1026.62,323.90,1031.85,323.90,1037.08,323.90C1042.30,323.90,1047.53,323.90,1052.75,323.90C1057.97,323.90,1063.20,323.90,1068.42,323.90C1073.65,323.90,1078.88,323.90,1084.10,323.90C1089.33,323.90,1094.55,323.90,1099.78,323.90C1105.00,323.90,1110.23,323.90,1115.45,323.90C1120.67,323.90,1125.90,323.90,1131.12,323.90C1136.35,323.90,1141.58,323.90,1146.80,323.90C1152.02,323.90,1157.25,323.90,1162.47,323.90C1167.70,323.90,1172.92,323.90,1178.15,323.90C1183.38,323.90,1188.60,323.90,1193.83,323.90C1199.05,323.90,1204.28,323.90,1209.50,323.90" stroke="#4cb140" stroke-width="2" fill="none"/><path d="M896.00,323.90C901.23,323.90,906.45,323.90,911.67,323.90C916.90,323.90,922.12,323.90,927.35,323.90C932.58,323.90,937.80,323.90,943.02,323.90C948.25,323.90,953.48,323.90,958.70,323.90C963.93,323.90,969.15,323.90,974.38,323.90C979.60,323.90,984.82,323.90,990.05,323.90C995.27,323.90,1000.50,323.90,1005.73,323.90C1010.95,323.90,1016.17,323.90,1021.40,323.90C1026.62,323.90,1031.85,323.90,1037.08,323.90C1042.30,323.90,1047.53,323.90,1052.75,323.90C1057.97,323.90,1063.20,323.90,1068.42,323.90C1073.65,323.90,1078.88,323.90,1084.10,323.90C1089.33,323.90,1094.55,323.90,1099.78,323.90C1105.00,323.90,1110.23,323.90,1115.45,323.90C1120.67,323.90,1125.90,323.90,1131.12,323.90C1136.35,323.90,1141.58,323.90,1146.80,323.90C1152.02,323.90,1157.25,323.90,1162.47,323.90C1167.70,323.90,1172.92,323.90,1178.15,323.90C1183.38,323.90,1188.60,323.90,1193.83,323.90C1199.05,323.90,1204.28,323.90,1209.50,323.90" stroke="#009596" stroke-width="2" fill="none"/><rect x="881.20" y="410.30" width="10" height="10" fill="#0066cc"/><rect x="974.20" y="410.30" width="10" height="10" fill="#4cb140"/><rect x="1063.20" y="410.30" width="10" height="10" fill="#009596"/></g><g aria-label="Response size"><g transform="translate(1628.90,230.00) scale(0.02734)" fill="#0066cc"><path d="M0 180V56c0-13.3 10.7-24 24-24h124c6.600 0 12 5.400 12 12v40c0 6.600-5.400 12-12 12H64v84c0 6.600-5.400 12-12 12H12c-6.600 0-12-5.400-12-12zM288 44v40c0 6.600 5.400 12 12 12h84v84c0 6.600 5.400 12 12 12h40c6.600 0 12-5.400 12-12V56c0-13.300-10.700-24-24-24H300c-6.600 0-12 5.400-12 12zm148 276h-40c-6.600 0-12 5.400-12 12v84h-84c-6.600 0-12 5.400-12 12v40c0 6.600 5.400 12 12 12h124c13.300 0 24-10.700 24-24V332c0-6.600-5.400-12-12-12zM160 468v-40c0-6.600-5.400-12-12-12H64v-84c0-6.600-5.400-12-12-12H12c-6.600 0-12 5.400-12 12v124c0 13.300 10.700 24 24 24h124c6.600 0 12-5.400 12-12z"/></g><path d="M1302.00,379.60V267.60" stroke="#d4d4d4" stroke-width="1" stroke-dasharray="10,5" fill="none"/><path d="M1302.00,380.00v5" stroke="#d4d4d4" stroke-width="1" fill="none"/><path d="M1364.70,379.60V267.60" stroke="#d4d4d4" stroke-width="1" stroke-dasharray="10,5" fill="none"/><path d="M1364.70,380.00v5" stroke="#d4d4d4" stroke-width="1" fill="none"/><path d="M1427.40,379.60V267.60" stroke="#d4d4d4" stroke-width="1" stroke-dasharray="10,5" fill="none"/><path d="M1427.40,380.00v5" stroke="#d4d4d4" stroke-width="1" fill="none"/><path d="M1490.10,379.60V267.60" stroke="#d4d4d4" stroke-width="1" stroke-dasharray="10,5" fill="none"/><path d="M1490.10,380.00v5" stroke="#d4d4d4" stroke-width="1" fill="none"/><path d="M1552.80,379.60V267.60" stroke="#d4d4d4" stroke-width="1" stroke-dasharray="10,5" fill="none"/><path d="M1552.80,380.00v5" stroke="#d4d4d4" stroke-width="1" fill="none"/><path d="M1615.50,379.60V267.60" stroke="#d4d4d4" stroke-width="1" stroke-dasharray="10,5" fill="none"/><path d="M1615.50,380.00v5" stroke="#d4d4d4" stroke-width="1" fill="none"/><path d="M1287.00,268.70H1633.00" stroke="#d4d4d4" stroke-width="1" stroke-dasharray="10,5" fill="none"/><path d="M1282.00,268.70h5" stroke="#d4d4d4" stroke-width="1" fill="none"/><path d="M1287.00,287.10H1633.00" stroke="#d4d4d4" stroke-width="1" stroke-dasharray="10,5" fill="none"/><path d="M1282.00,287.10h5" stroke="#d4d4d4" stroke-width="1" fill="none"/><path d="M1287.00,305.40H1633.00" stroke="#d4d4d4" stroke-width="1" stroke-dasharray="10,5" fill="none"/><path d="M1282.00,305.40h5" stroke="#d4d4d4" stroke-width="1" fill="none"/><path d="M1287.00,323.80H1633.00" stroke="#d4d4d4" stroke-width="1" stroke-dasharray="10,5" fill="none"/><path d="M1282.00,323.80h5" stroke="#d4d4d4" stroke-width="1" fill="none"/><path d="M1287.00,342.20H1633.00" stroke="#d4d4d4" stroke-width="1" stroke-dasharray="10,5" fill="none"/><path d="M1282.00,342.20h5" stroke="#d4d4d4" stroke-width="1" fill="none"/><path d="M1287.00,360.50H1633.00" stroke="#d4d4d4" stroke-width="1" stroke-dasharray="10,5" fill="none"/><path d="M1282.00,360.50h5" stroke="#d4d4d4" stroke-width="1" fill="none"/><path d="M1287.00,378.90H1633.00" stroke="#d4d4d4" stroke-width="1" stroke-dasharray="10,5" fill="none"/><path d="M1282.00,378.90h5" stroke="#d4d4d4" stroke-width="1" fill="none"/><path d="M1287.00,267.60V380.00" stroke="#d2d2d2" stroke-width="1" fill="none"/><path d="M1286.50,380.00H1633.00" stroke="#d2d2d2" stroke-width="1" fill="none"/><path d="M1302.00,369.70C1307.22,354.40,1312.45,339.10,1317.67,323.80C1322.90,308.50,1328.12,277.90,1333.35,277.90C1338.58,277.90,1343.80,369.70,1349.03,369.70C1354.25,369.70,1359.48,323.80,1364.70,323.80C1369.92,323.80,1375.15,323.80,1380.38,323.80C1385.60,323.80,1390.83,369.70,1396.05,369.70C1401.27,369.70,1406.50,339.10,1411.72,323.80C1416.95,308.50,1422.17,277.90,1427.40,277.90C1432.62,277.90,1437.85,369.70,1443.08,369.70C1448.30,369.70,1453.53,323.80,1458.75,323.80C1463.97,323.80,1469.20,323.80,1474.42,323.80C1479.65,323.80,1484.88,369.70,1490.10,369.70C1495.33,369.70,1500.55,323.80,1505.78,323.80C1511.00,323.80,1516.23,323.80,1521.45,323.80C1526.67,323.80,1531.90,369.70,1537.12,369.70C1542.35,369.70,1547.58,323.80,1552.80,323.80C1558.02,323.80,1563.25,323.80,1568.47,323.80C1573.70,323.80,1578.92,369.70,1584.15,369.70C1589.38,369.70,1594.60,339.10,1599.83,323.80C1605.05,308.50,1610.28,293.20,1615.50,277.90" stroke="#0066cc" stroke-width="2" fill="none"/><path d="M1302.00,323.80C1307.22,300.85,1312.45,277.90,1317.67,277.90C1322.90,277.90,1328.12,369.70,1333.35,369.70C1338.58,369.70,1343.80,339.10,1349.03,323.80C1354.25,308.50,1359.48,277.90,1364.70,277.90C1369.92,277.90,1375.15,369.70,1380.38,369.70C1385.60,369.70,1390.83,339.10,1396.05,323.80C1401.27,308.50,1406.50,277.90,1411.72,277.90C1416.95,277.90,1422.17,369.70,1427.40,369.70C1432.62,369.70,1437.85,339.10,1443.08,323.80C1448.30,308.50,1453.53,277.90,1458.75,277.90C1463.97,277.90,1469.20,323.80,1474.42,323.80C1479.65,323.80,1484.88,323.80,1490.10,323.80C1495.33,323.80,1500.55,277.90,1505.78,277.90C1511.00,277.90,1516.23,323.80,1521.45,323.80C1526.67,323.80,1531.90,323.80,1537.12,323.80C1542.35,323.80,1547.58,277.90,1552.80,277.90C1558.02,277.90,1563.25,369.70,1568.47,369.70C1573.70,369.70,1578.92,323.80,1584.15,323.80C1589.38,323.80,1594.60,323.80,1599.83,323.80C1605.05,323.80,1610.28,346.75,1615.50,369.70" stroke="#4cb140" stroke-width="2" fill="none"/><path d="M1302.00,369.70C1307.22,354.40,1312.45,339.10,1317.67,323.80C1322.90,308.50,1328.12,277.90,1333.35,277.90C1338.58,277.90,1343.80,369.70,1349.03,369.70C1354.25,369.70,1359.48,339.10,1364.70,323.80C1369.92,308.50,1375.15,277.90,1380.38,277.90C1385.60,277.90,1390.83,323.80,1396.05,323.80C1401.27,323.80,1406.50,323.80,1411.72,323.80C1416.95,323.80,1422.17,277.90,1427.40,277.90C1432.62,277.90,1437.85,323.80,1443.08,323.80C1448.30,323.80,1453.53,323.80,1458.75,323.80C1463.97,323.80,1469.20,277.90,1474.42,277.90C1479.65,277.90,1484.88,369.70,1490.10,369.70C1495.33,369.70,1500.55,339.10,1505.78,323.80C1511.00,308.50,1516.23,277.90,1521.45,277.90C1526.67,277.90,1531.90,369.70,1537.12,369.70C1542.35,369.70,1547.58,339.10,1552.80,323.80C1558.02,308.50,1563.25,277.90,1568.47,277.90C1573.70,277.90,1578.92,369.70,1584.15,369.70C1589.38,369.70,1594.60,339.10,1599.83,323.80C1605.05,308.50,1610.28,293.20,1615.50,277.90" stroke="#009596" stroke-width="2" fill="none"/><rect x="1287.20" y="410.30" width="10" height="10" fill="#0066cc"/><rect x="1380.20" y="410.30" width="10" height="10" fill="#4cb140"/><rect x="1469.20" y="410.30" width="10" height="10" fill="#009596"/></g><g aria-label="Request throughput"><g transform="translate(412.90,435.00) scale(0.02734)" fill="#0066cc"><path d="M0 180V56c0-13.3 10.7-24 24-24h124c6.600 0 12 5.400 12 12v40c0 6.600-5.400 12-12 12H64v84c0 6.600-5.400 12-12 12H12c-6.600 0-12-5.400-12-12zM288 44v40c0 6.600 5.400 12 12 12h84v84c0 6.600 5.400 12 12 12h40c6.600 0 12-5.400 12-12V56c0-13.300-10.700-24-24-24H300c-6.600 0-12 5.400-12 12zm148 276h-40c-6.600 0-12 5.400-12 12v84h-84c-6.600 0-12 5.400-12 12v40c0 6.600 5.400 12 12 12h124c13.300 0 24-10.700 24-24V332c0-6.600-5.400-12-12-12zM160 468v-40c0-6.600-5.400-12-12-12H64v-84c0-6.600-5.400-12-12-12H12c-6.600 0-12 5.400-12 12v124c0 13.300 10.700 24 24 24h124c6.600 0 12-5.400 12-12z"/></g><path d="M85.00,584.60V472.60" stroke="#d4d4d4" stroke-width="1" stroke-dasharray="10,5" fill="none"/><path d="M85.00,585.00v5" stroke="#d4d4d4" stroke-width="1" fill="none"/><path d="M147.70,584.60V472.60" stroke="#d4d4d4" stroke-width="1" stroke-dasharray="10,5" fill="none"/><path d="M147.70,585.00v5" stroke="#d4d4d4" stroke-width="1" fill="none"/><path d="M210.40,584.60V472.60" stroke="#d4d4d4" stroke-width="1" stroke-dasharray="10,5" fill="none"/><path d="M210.40,585.00v5" stroke="#d4d4d4" stroke-width="1" fill="none"/><path d="M273.10,584.60V472.60" stroke="#d4d4d4" stroke-width="1" stroke-dasharray="10,5" fill="none"/><path d="M273.10,585.00v5" stroke="#d4d4d4" stroke-width="1" fill="none"/><path d="M335.80,584.60V472.60" stroke="#d4d4d4" stroke-width="1" stroke-dasharray="10,5" fill="none"/><path d="M335.80,585.00v5" stroke="#d4d4d4" stroke-width="1" fill="none"/><path d="M398.50,584.60V472.60" stroke="#d4d4d4" stroke-width="1" stroke-dasharray="10,5" fill="none"/><path d="M398.50,585.00v5" stroke="#d4d4d4" stroke-width="1" fill="none"/><path d="M70.00,498.50H416.00" stroke="#d4d4d4" stroke-width="1" stroke-dasharray="10,5" fill="none"/><path d="M65.00,498.50h5" stroke="#d4d4d4" stroke-width="1" fill="none"/><path d="M70.00,528.80H416.00" stroke="#d4d4d4" stroke-width="1" stroke-dasharray="10,5" fill="none"/><path d="M65.00,528.80h5" stroke="#d4d4d4" stroke-width="1" fill="none"/><path d="M70.00,559.70H416.00" stroke="#d4d4d4" stroke-width="1" stroke-dasharray="10,5" fill="none"/><path d="M65.00,559.70h5" stroke="#d4d4d4" stroke-width="1" fill="none"/><path d="M70.00,472.60V585.00" stroke="#d2d2d2" stroke-width="1" fill="none"/><path d="M69.50,585.00H416.00" stroke="#d2d2d2" stroke-width="1" fill="none"/><path d="M85.00,529.00C90.22,506.05,95.45,483.10,100.67,483.10C105.90,483.10,111.12,529.00,116.35,529.00C121.58,529.00,126.80,483.10,132.03,483.10C137.25,483.10,142.47,529.00,147.70,529.00C152.92,529.00,158.15,529.00,163.38,529.00C168.60,529.00,173.83,483.10,179.05,483.10C184.28,483.10,189.50,529.00,194.72,529.00C199.95,529.00,205.18,529.00,210.40,529.00C215.62,529.00,220.85,483.10,226.07,483.10C231.30,483.10,236.53,529.00,241.75,529.00C246.97,529.00,252.20,529.00,257.43,529.00C262.65,529.00,267.88,483.10,273.10,483.10C278.32,483.10,283.55,529.00,288.77,529.00C294.00,529.00,299.22,483.10,304.45,483.10C309.68,483.10,314.90,529.00,320.12,529.00C325.35,529.00,330.57,529.00,335.80,529.00C341.03,529.00,346.25,483.10,351.48,483.10C356.70,483.10,361.93,529.00,367.15,529.00C372.38,529.00,377.60,483.10,382.82,483.10C388.05,483.10,393.27,529.00,398.50,574.90" stroke="#0066cc" stroke-width="2" fill="none"/><path d="M85.00,529.00C90.22,506.05,95.45,483.10,100.67,483.10C105.90,483.10,111.12,529.00,116.35,529.00C121.58,529.00,126.80,483.10,132.03,483.10C137.25,483.10,142.47,529.00,147.70,529.00C152.92,529.00,158.15,529.00,163.38,529.00C168.60,529.00,173.83,483.10,179.05,483.10C184.28,483.10,189.50,529.00,194.72,529.00C199.95,529.00,205.18,529.00,210.40,529.00C215.62,529.00,220.85,483.10,226.07,483.10C231.30,483.10,236.53,529.00,241.75,529.00C246.97,529.00,252.20,529.00,257.43,529.00C262.65,529.00,267.88,483.10,273.10,483.10C278.32,483.10,283.55,529.00,288.77,529.00C294.00,529.00,299.22,483.10,304.45,483.10C309.68,483.10,314.90,529.00,320.12,529.00C325.35,529.00,330.57,529.00,335.80,529.00C341.03,529.00,346.25,483.10,351.48,483.10C356.70,483.10,361.93,529.00,367.15,529.00C372.38,529.00,377.60,483.10,382.82,483.10C388.05,483.10,393.27,529.00,398.50,574.90" stroke="#4cb140" stroke-width="2" fill="none"/><path d="M85.00,529.00C90.22,506.05,95.45,483.10,100.67,483.10C105.90,483.10,111.12,529.00,116.35,529.00C121.58,529.00,126.80,483.10,132.03,483.10C137.25,483.10,142.47,529.00,147.70,529.00C152.92,529.00,158.15,529.00,163.38,529.00C168.60,529.00,173.83,483.10,179.05,483.10C184.28,483.10,189.50,529.00,194.72,529.00C199.95,529.00,205.18,529.00,210.40,529.00C215.62,529.00,220.85,483.10,226.07,483.10C231.30,483.10,236.53,529.00,241.75,529.00C246.97,529.00,252.20,529.00,257.43,529.00C262.65,529.00,267.88,483.10,273.10,483.10C278.32,483.10,283.55,529.00,288.77,529.00C294.00,529.00,299.22,483.10,304.45,483.10C309.68,483.10,314.90,529.00,320.12,529.00C325.35,529.00,330.57,529.00,335.80,529.00C341.03,529.00,346.25,483.10,351.48,483.10C356.70,483.10,361.93,529.00,367.15,529.00C372.38,529.00,377.60,483.10,382.82,483.10C388.05,483.10,393.27,529.00,398.50,574.90" stroke="#009596" stroke-width="2" fill="none"/><rect x="70.20" y="615.30" width="10" height="10" fill="#0066cc"/><rect x="139.00" y="615.30" width="10" height="10" fill="#4cb140"/><rect x="203.00" y="615.30" width="10" height="10" fill="#009596"/></g><g aria-label="Response throughput"><g transform="translate(817.90,435.00) scale(0.02734)" fill="#0066cc"><path d="M0 180V56c0-13.3 10.7-24 24-24h124c6.600 0 12 5.400 12 12v40c0 6.600-5.400 12-12 12H64v84c0 6.600-5.400 12-12 12H12c-6.600 0-12-5.400-12-12zM288 44v40c0 6.600 5.400 12 12 12h84v84c0 6.600 5.400 12 12 12h40c6.600 0 12-5.400 12-12V56c0-13.300-10.700-24-24-24H300c-6.600 0-12 5.400-12 12zm148 276h-40c-6.600 0-12 5.400-12 12v84h-84c-6.600 0-12 5.400-12 12v40c0 6.600 5.400 12 12 12h124c13.300 0 24-10.700 24-24V332c0-6.600-5.400-12-12-12zM160 468v-40c0-6.600-5.400-12-12-12H64v-84c0-6.600-5.400-12-12-12H12c-6.600 0-12 5.400-12 12v124c0 13.300 10.700 24 24 24h124c6.600 0 12-5.400 12-12z"/></g><path d="M491.00,584.60V472.60" stroke="#d4d4d4" stroke-width="1" stroke-dasharray="10,5" fill="none"/><path d="M491.00,585.00v5" stroke="#d4d4d4" stroke-width="1" fill="none"/><path d="M553.70,584.60V472.60" stroke="#d4d4d4" stroke-width="1" stroke-dasharray="10,5" fill="none"/><path d="M553.70,585.00v5" stroke="#d4d4d4" stroke-width="1" fill="none"/><path d="M616.40,584.60V472.60" stroke="#d4d4d4" stroke-width="1" stroke-dasharray="10,5" fill="none"/><path d="M616.40,585.00v5" stroke="#d4d4d4" stroke-width="1" fill="none"/><path d="M679.10,584.60V472.60" stroke="#d4d4d4" stroke-width="1" stroke-dasharray="10,5" fill="none"/><path d="M679.10,585.00v5" stroke="#d4d4d4" stroke-width="1" fill="none"/><path d="M741.80,584.60V472.60" stroke="#d4d4d4" stroke-width="1" stroke-dasharray="10,5" fill="none"/><path d="M741.80,585.00v5" stroke="#d4d4d4" stroke-width="1" fill="none"/><path d="M804.50,584.60V472.60" stroke="#d4d4d4" stroke-width="1" stroke-dasharray="10,5" fill="none"/><path d="M804.50,585.00v5" stroke="#d4d4d4" stroke-width="1" fill="none"/><path d="M476.00,483.50H822.00" stroke="#d4d4d4" stroke-width="1" stroke-dasharray="10,5" fill="none"/><path d="M471.00,483.50h5" stroke="#d4d4d4" stroke-width="1" fill="none"/><path d="M476.00,500.60H822.00" stroke="#d4d4d4" stroke-width="1" stroke-dasharray="10,5" fill="none"/><path d="M471.00,500.60h5" stroke="#d4d4d4" stroke-width="1" fill="none"/><path d="M476.00,517.70H822.00" stroke="#d4d4d4" stroke-width="1" stroke-dasharray="10,5" fill="none"/><path d="M471.00,517.70h5" stroke="#d4d4d4" stroke-width="1" fill="none"/><path d="M476.00,534.80H822.00" stroke="#d4d4d4" stroke-width="1" stroke-dasharray="10,5" fill="none"/><path d="M471.00,534.80h5" stroke="#d4d4d4" stroke-width="1" fill="none"/><path d="M476.00,551.90H822.00" stroke="#d4d4d4" stroke-width="1" stroke-dasharray="10,5" fill="none"/><path d="M471.00,551.90h5" stroke="#d4d4d4" stroke-width="1" fill="none"/><path d="M476.00,569.00H822.00" stroke="#d4d4d4" stroke-width="1" stroke-dasharray="10,5" fill="none"/><path d="M471.00,569.00h5" stroke="#d4d4d4" stroke-width="1" fill="none"/><path d="M476.00,472.60V585.00" stroke="#d2d2d2" stroke-width="1" fill="none"/><path d="M475.50,585.00H822.00" stroke="#d2d2d2" stroke-width="1" fill="none"/><path d="M491.00,574.20C496.23,559.08,501.45,543.97,506.68,528.85C511.90,513.73,517.12,483.50,522.35,483.50C527.58,483.50,532.80,574.20,538.02,574.20C543.25,574.20,548.48,528.85,553.70,528.85C558.93,528.85,564.15,528.85,569.38,528.85C574.60,528.85,579.82,574.20,585.05,574.20C590.27,574.20,595.50,543.97,600.73,528.85C605.95,513.73,611.17,483.50,616.40,483.50C621.62,483.50,626.85,574.20,632.08,574.20C637.30,574.20,642.52,528.85,647.75,528.85C652.98,528.85,658.20,528.85,663.42,528.85C668.65,528.85,673.88,574.20,679.10,574.20C684.33,574.20,689.55,528.85,694.77,528.85C700.00,528.85,705.23,528.85,710.45,528.85C715.68,528.85,720.90,574.20,726.12,574.20C731.35,574.20,736.57,528.85,741.80,528.85C747.02,528.85,752.25,528.85,757.48,528.85C762.70,528.85,767.92,574.20,773.15,574.20C778.38,574.20,783.60,543.97,788.83,528.85C794.05,513.73,799.27,498.62,804.50,483.50" stroke="#0066cc" stroke-width="2" fill="none"/><path d="M491.00,528.85C496.23,506.18,501.45,483.50,506.68,483.50C511.90,483.50,517.12,574.20,522.35,574.20C527.58,574.20,532.80,543.97,538.02,528.85C543.25,513.73,548.48,483.50,553.70,483.50C558.93,483.50,564.15,574.20,569.38,574.20C574.60,574.20,579.82,543.97,585.05,528.85C590.27,513.73,595.50,483.50,600.73,483.50C605.95,483.50,611.17,574.20,616.40,574.20C621.62,574.20,626.85,543.97,632.08,528.85C637.30,513.73,642.52,483.50,647.75,483.50C652.98,483.50,658.20,528.85,663.42,528.85C668.65,528.85,673.88,528.85,679.10,528.85C684.33,528.85,689.55,483.50,694.77,483.50C700.00,483.50,705.23,528.85,710.45,528.85C715.68,528.85,720.90,528.85,726.12,528.85C731.35,528.85,736.57,483.50,741.80,483.50C747.02,483.50,752.25,574.20,757.48,574.20C762.70,574.20,767.92,528.85,773.15,528.85C778.38,528.85,783.60,528.85,788.83,528.85C794.05,528.85,799.27,551.53,804.50,574.20" stroke="#4cb140" stroke-width="2" fill="none"/><path d="M491.00,574.20C496.23,559.08,501.45,543.97,506.68,528.85C511.90,513.73,517.12,483.50,522.35,483.50C527.58,483.50,532.80,574.20,538.02,574.20C543.25,574.20,548.48,543.97,553.70,528.85C558.93,513.73,564.15,483.50,569.38,483.50C574.60,483.50,579.82,528.85,585.05,528.85C590.27,528.85,595.50,528.85,600.73,528.85C605.95,528.85,611.17,483.50,616.40,483.50C621.62,483.50,626.85,528.85,632.08,528.85C637.30,528.85,642.52,528.85,647.75,528.85C652.98,528.85,658.20,483.50,663.42,483.50C668.65,483.50,673.88,574.20,679.10,574.20C684.33,574.20,689.55,543.97,694.77,528.85C700.00,513.73,705.23,483.50,710.45,483.50C715.68,483.50,720.90,574.20,726.12,574.20C731.35,574.20,736.57,543.97,741.80,528.85C747.02,513.73,752.25,483.50,757.48,483.50C762.70,483.50,767.92,574.20,773.15,574.20C778.38,574.20,783.60,543.97,788.83,528.85C794.05,513.73,799.27,498.62,804.50,483.50" stroke="#009596" stroke-width="2" fill="none"/><rect x="476.20" y="615.30" width="10" height="10" fill="#0066cc"/><rect x="545.00" y="615.30" width="10" height="10" fill="#4cb140"/><rect x="609.00" y="615.30" width="10" height="10" fill="#009596"/></g><g aria-label="gRPC received"><g transform="translate(1223.40,435.00) scale(0.02734)" fill="#0066cc"><path d="M0 180V56c0-13.3 10.7-24 24-24h124c6.600 0 12 5.400 12 12v40c0 6.600-5.400 12-12 12H64v84c0 6.600-5.400 12-12 12H12c-6.600 0-12-5.400-12-12zM288 44v40c0 6.600 5.400 12 12 12h84v84c0 6.600 5.400 12 12 12h40c6.600 0 12-5.400 12-12V56c0-13.300-10.700-24-24-24H300c-6.600 0-12 5.400-12 12zm148 276h-40c-6.600 0-12 5.400-12 12v84h-84c-6.600 0-12 5.400-12 12v40c0 6.600 5.400 12 12 12h124c13.300 0 24-10.700 24-24V332c0-6.600-5.400-12-12-12zM160 468v-40c0-6.600-5.400-12-12-12H64v-84c0-6.600-5.400-12-12-12H12c-6.600 0-12 5.400-12 12v124c0 13.300 10.700 24 24 24h124c6.600 0 12-5.400 12-12z"/></g><path d="M882.00,473.50V584.00H1236.50" fill="none" stroke="#dadada" stroke-width="1" stroke-linecap="square" stroke-linejoin="miter"/></g><g aria-label="gRPC sent"><g transform="translate(1628.90,435.00) scale(0.02734)" fill="#0066cc"><path d="M0 180V56c0-13.3 10.7-24 24-24h124c6.600 0 12 5.400 12 12v40c0 6.600-5.400 12-12 12H64v84c0 6.600-5.400 12-12 12H12c-6.600 0-12-5.400-12-12zM288 44v40c0 6.600 5.400 12 12 12h84v84c0 6.600 5.400 12 12 12h40c6.600 0 12-5.400 12-12V56c0-13.300-10.700-24-24-24H300c-6.600 0-12 5.400-12 12zm148 276h-40c-6.600 0-12 5.400-12 12v84h-84c-6.600 0-12 5.400-12 12v40c0 6.600 5.400 12 12 12h124c13.300 0 24-10.700 24-24V332c0-6.600-5.400-12-12-12zM160 468v-40c0-6.600-5.400-12-12-12H64v-84c0-6.600-5.400-12-12-12H12c-6.600 0-12 5.400-12 12v124c0 13.300 10.700 24 24 24h124c6.600 0 12-5.400 12-12z"/></g><path d="M1288.00,473.50V584.00H1641.50" fill="none" stroke="#dadada" stroke-width="1" stroke-linecap="square" stroke-linejoin="miter"/></g><g aria-label="TCP opened"><g transform="translate(412.90,640.00) scale(0.02734)" fill="#0066cc"><path d="M0 180V56c0-13.3 10.7-24 24-24h124c6.600 0 12 5.400 12 12v40c0 6.600-5.400 12-12 12H64v84c0 6.600-5.400 12-12 12H12c-6.600 0-12-5.400-12-12zM288 44v40c0 6.600 5.400 12 12 12h84v84c0 6.600 5.400 12 12 12h40c6.600 0 12-5.400 12-12V56c0-13.300-10.700-24-24-24H300c-6.600 0-12 5.400-12 12zm148 276h-40c-6.600 0-12 5.400-12 12v84h-84c-6.600 0-12 5.400-12 12v40c0 6.600 5.400 12 12 12h124c13.300 0 24-10.700 24-24V332c0-6.600-5.400-12-12-12zM160 468v-40c0-6.600-5.400-12-12-12H64v-84c0-6.600-5.400-12-12-12H12c-6.600 0-12 5.400-12 12v124c0 13.300 10.700 24 24 24h124c6.600 0 12-5.400 12-12z"/></g><path d="M71.00,678.50V789.00H425.50" fill="none" stroke="#dadada" stroke-width="1" stroke-linecap="square" stroke-linejoin="miter"/></g><g aria-label="TCP closed"><g transform="translate(817.90,640.00) scale(0.02734)" fill="#0066cc"><path d="M0 180V56c0-13.3 10.7-24 24-24h124c6.600 0 12 5.400 12 12v40c0 6.600-5.400 12-12 12H64v84c0 6.600-5.400 12-12 12H12c-6.600 0-12-5.400-12-12zM288 44v40c0 6.600 5.400 12 12 12h84v84c0 6.600 5.400 12 12 12h40c6.600 0 12-5.400 12-12V56c0-13.300-10.700-24-24-24H300c-6.600 0-12 5.400-12 12zm148 276h-40c-6.600 0-12 5.400-12 12v84h-84c-6.600 0-12 5.400-12 12v40c0 6.600 5.400 12 12 12h124c13.300 0 24-10.700 24-24V332c0-6.600-5.400-12-12-12zM160 468v-40c0-6.600-5.400-12-12-12H64v-84c0-6.600-5.400-12-12-12H12c-6.600 0-12 5.400-12 12v124c0 13.300 10.700 24 24 24h124c6.600 0 12-5.400 12-12z"/></g><path d="M477.00,678.50V789.00H831.50" fill="none" stroke="#dadada" stroke-width="1" stroke-linecap="square" stroke-linejoin="miter"/></g><g aria-label="TCP received"><g transform="translate(1223.40,640.00) scale(0.02734)" fill="#0066cc"><path d="M0 180V56c0-13.3 10.7-24 24-24h124c6.600 0 12 5.400 12 12v40c0 6.600-5.400 12-12 12H64v84c0 6.600-5.400 12-12 12H12c-6.600 0-12-5.400-12-12zM288 44v40c0 6.600 5.400 12 12 12h84v84c0 6.600 5.400 12 12 12h40c6.600 0 12-5.400 12-12V56c0-13.300-10.700-24-24-24H300c-6.600 0-12 5.400-12 12zm148 276h-40c-6.600 0-12 5.400-12 12v84h-84c-6.600 0-12 5.400-12 12v40c0 6.600 5.400 12 12 12h124c13.300 0 24-10.700 24-24V332c0-6.600-5.400-12-12-12zM160 468v-40c0-6.600-5.400-12-12-12H64v-84c0-6.600-5.400-12-12-12H12c-6.600 0-12 5.400-12 12v124c0 13.300 10.700 24 24 24h124c6.600 0 12-5.400 12-12z"/></g><path d="M882.00,678.50V789.00H1236.50" fill="none" stroke="#dadada" stroke-width="1" stroke-linecap="square" stroke-linejoin="miter"/></g><g aria-label="TCP sent"><g transform="translate(1628.90,640.00) scale(0.02734)" fill="#0066cc"><path d="M0 180V56c0-13.3 10.7-24 24-24h124c6.600 0 12 5.400 12 12v40c0 6.600-5.400 12-12 12H64v84c0 6.600-5.400 12-12 12H12c-6.600 0-12-5.400-12-12zM288 44v40c0 6.600 5.400 12 12 12h84v84c0 6.600 5.400 12 12 12h40c6.600 0 12-5.400 12-12V56c0-13.300-10.700-24-24-24H300c-6.600 0-12 5.400-12 12zm148 276h-40c-6.600 0-12 5.400-12 12v84h-84c-6.600 0-12 5.400-12 12v40c0 6.600 5.400 12 12 12h124c13.300 0 24-10.700 24-24V332c0-6.600-5.400-12-12-12zM160 468v-40c0-6.600-5.400-12-12-12H64v-84c0-6.600-5.400-12-12-12H12c-6.600 0-12 5.400-12 12v124c0 13.300 10.700 24 24 24h124c6.600 0 12-5.400 12-12z"/></g><path d="M1288.00,678.50V789.00H1641.50" fill="none" stroke="#dadada" stroke-width="1" stroke-linecap="square" stroke-linejoin="miter"/></g></svg>
<div id="menu" class="abs" role="menu"><div id="msep" class="abs"></div><span class="cb" style="left:61px;top:208px"></span><label class="t" style="left:82.88px;top:210.10px;font-size:14px;color:#151515;transform:scaleX(1.0333);transform-origin:0 0;">Select all metric/label filters</label><span class="t" style="left:60.75px;top:244.90px;font-size:14px;color:#6a6e73;transform:scaleX(0.9665);transform-origin:0 0;-webkit-text-stroke:0.45px #6a6e73;">Show metrics by:</span><span class="cb" style="left:61px;top:274px"></span><label class="t" style="left:83.32px;top:273.20px;font-size:14px;color:#151515;transform:scaleX(0.9996);transform-origin:0 0;">Local version</label><span class="cb on" style="left:61px;top:295px"><svg width="14" height="14" viewBox="0 0 14 14"><path d="M3.1 6.9l2.85 3.2 5.45-6.6" fill="none" stroke="#fff" stroke-width="1.9"/></svg></span><label class="t" style="left:83.34px;top:294.20px;font-size:14px;color:#151515;transform:scaleX(0.9899);transform-origin:0 0;">Remote namespace</label><span class="cb on" style="left:77px;top:316px"><svg width="14" height="14" viewBox="0 0 14 14"><path d="M3.1 6.9l2.85 3.2 5.45-6.6" fill="none" stroke="#fff" stroke-width="1.9"/></svg></span><label class="t" style="left:98.69px;top:315.20px;font-size:14px;color:#151515;transform:scaleX(1.0715);transform-origin:0 0;">travel-portal</label><span class="cb on" style="left:61px;top:337px"><svg width="14" height="14" viewBox="0 0 14 14"><path d="M3.1 6.9l2.85 3.2 5.45-6.6" fill="none" stroke="#fff" stroke-width="1.9"/></svg></span><label class="t" style="left:83.33px;top:336.20px;font-size:14px;color:#151515;transform:scaleX(0.9963);transform-origin:0 0;">Remote app</label><span class="cb on" style="left:77px;top:358px"><svg width="14" height="14" viewBox="0 0 14 14"><path d="M3.1 6.9l2.85 3.2 5.45-6.6" fill="none" stroke="#fff" stroke-width="1.9"/></svg></span><label class="t" style="left:98.73px;top:357.20px;font-size:14px;color:#151515;transform:scaleX(1.0253);transform-origin:0 0;">travels</label><span class="cb on" style="left:77px;top:379px"><svg width="14" height="14" viewBox="0 0 14 14"><path d="M3.1 6.9l2.85 3.2 5.45-6.6" fill="none" stroke="#fff" stroke-width="1.9"/></svg></span><label class="t" style="left:99.37px;top:378.20px;font-size:14px;color:#151515;transform:scaleX(1.0302);transform-origin:0 0;">viaggi</label><span class="cb on" style="left:77px;top:400px"><svg width="14" height="14" viewBox="0 0 14 14"><path d="M3.1 6.9l2.85 3.2 5.45-6.6" fill="none" stroke="#fff" stroke-width="1.9"/></svg></span><label class="t" style="left:99.39px;top:399.20px;font-size:14px;color:#151515;transform:scaleX(0.9840);transform-origin:0 0;">voyages</label><span class="cb" style="left:61px;top:421px"></span><label class="t" style="left:83.33px;top:420.20px;font-size:14px;color:#151515;transform:scaleX(0.9956);transform-origin:0 0;">Remote version</label><span class="cb on" style="left:61px;top:442px"><svg width="14" height="14" viewBox="0 0 14 14"><path d="M3.1 6.9l2.85 3.2 5.45-6.6" fill="none" stroke="#fff" stroke-width="1.9"/></svg></span><label class="t" style="left:83.34px;top:441.20px;font-size:14px;color:#151515;transform:scaleX(0.9848);transform-origin:0 0;">Response code</label><span class="cb on" style="left:77px;top:463px"><svg width="14" height="14" viewBox="0 0 14 14"><path d="M3.1 6.9l2.85 3.2 5.45-6.6" fill="none" stroke="#fff" stroke-width="1.9"/></svg></span><label class="t" style="left:98.63px;top:462.20px;font-size:14px;color:#151515;transform:scaleX(1.1715);transform-origin:0 0;">200</label><span class="cb" style="left:61px;top:484px"></span><label class="t" style="left:82.59px;top:483.20px;font-size:14px;color:#151515;transform:scaleX(1.0050);transform-origin:0 0;">GRPC status</label><span class="cb" style="left:61px;top:505px"></span><label class="t" style="left:83.34px;top:504.20px;font-size:14px;color:#151515;transform:scaleX(0.9830);transform-origin:0 0;">Response flags</label><span class="cb" style="left:61px;top:526px"></span><label class="t" style="left:83.49px;top:525.20px;font-size:14px;color:#151515;transform:scaleX(1.0104);transform-origin:0 0;">Connection Security Policy</label><span class="t" style="left:61.05px;top:561.20px;font-size:14px;color:#6a6e73;transform:scaleX(0.9779);transform-origin:0 0;-webkit-text-stroke:0.45px #6a6e73;">Histograms:</span><svg class="ic" style="left:141.90px;top:561.10px" width="14" height="14" viewBox="0 0 14 14"><circle cx="7" cy="7" r="6.05" fill="none" stroke="#2b9af3" stroke-width="1.8"/><ellipse cx="7" cy="4.3" rx="1.05" ry="0.85" fill="#2b9af3"/><path d="M5.7 6.1h2.25v3.6l0.6 0.9H5.5l0.6-0.9V6.9H5.7z" fill="#2b9af3"/></svg><span class="cb on" style="left:61px;top:590px"><svg width="14" height="14" viewBox="0 0 14 14"><path d="M3.1 6.9l2.85 3.2 5.45-6.6" fill="none" stroke="#fff" stroke-width="1.9"/></svg></span><label class="t" style="left:84.25px;top:590.00px;font-size:14px;color:#151515;transform:scaleX(0.9657);transform-origin:0 0;">Average</label><span class="cb" style="left:61px;top:611px"></span><label class="t" style="left:83.48px;top:611.00px;font-size:14px;color:#151515;transform:scaleX(1.0168);transform-origin:0 0;">Quantile 0.5</label><span class="cb" style="left:61px;top:632px"></span><label class="t" style="left:83.48px;top:632.00px;font-size:14px;color:#151515;transform:scaleX(1.0243);transform-origin:0 0;">Quantile 0.95</label><span class="cb" style="left:61px;top:653px"></span><label class="t" style="left:83.47px;top:653.00px;font-size:14px;color:#151515;transform:scaleX(1.0288);transform-origin:0 0;">Quantile 0.99</label><span class="cb" style="left:61px;top:674px"></span><label class="t" style="left:83.46px;top:674.00px;font-size:14px;color:#151515;transform:scaleX(1.0371);transform-origin:0 0;">Quantile 0.999</label></div>
</div>
</body></html>
